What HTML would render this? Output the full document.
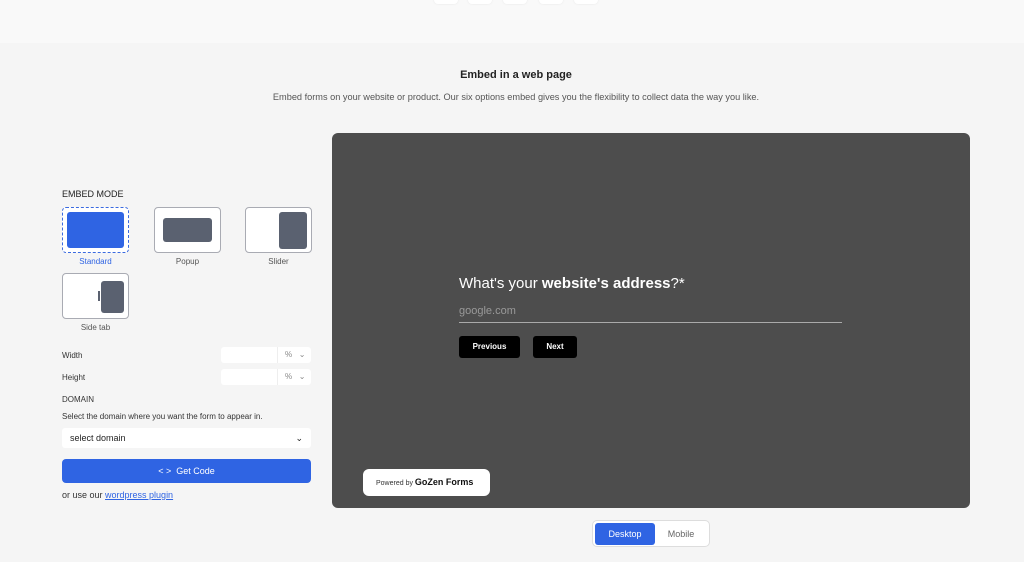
<!DOCTYPE html>
<html><head><style>
*{margin:0;padding:0;box-sizing:border-box}
body{width:1024px;height:562px;background:#f5f5f5;font-family:"Liberation Sans",sans-serif;position:relative;overflow:hidden;color:#222}
.a{position:absolute}
.top{left:0;top:0;width:1024px;height:43px;background:#f9f9f9}
.tb{top:-6px;width:24px;height:10px;background:#fff;border-radius:4px;box-shadow:0 0 2px rgba(0,0,0,.08)}
.card{width:67px;height:46px;background:#fff;border:1px solid #a9abb3;border-radius:4px}
.lbl{font-size:8px;color:#555;text-align:center;width:67px}
.sm{font-size:8px;color:#333}
.inp{background:#fff;border-radius:3px;height:16px;width:90px}
</style></head><body>
<div class="a top"></div>
<div class="a tb" style="left:434px"></div><div class="a tb" style="left:468px"></div><div class="a tb" style="left:503px"></div><div class="a tb" style="left:539px"></div><div class="a tb" style="left:574px"></div>

<div class="a" style="left:0;top:69px;width:1032px;text-align:center;font-size:11px;font-weight:bold;color:#222">Embed in a web page</div>
<div class="a" style="left:0;top:92px;width:1032px;text-align:center;font-size:9.2px;color:#555">Embed forms on your website or product. Our six options embed gives you the flexibility to collect data the way you like.</div>

<div class="a" style="left:62px;top:189px;font-size:9px;color:#222">EMBED MODE</div>
<div class="a card" style="left:62px;top:207px;border-color:#3a6ae0;border-style:dashed"><div class="a" style="left:4px;top:4px;width:57px;height:36px;background:#2f64e3;border-radius:3px"></div></div>
<div class="a lbl" style="left:62px;top:257px;color:#2f64e3">Standard</div>
<div class="a card" style="left:154px;top:207px"><div class="a" style="left:8px;top:10px;width:49px;height:24px;background:#5a6170;border-radius:3px"></div></div>
<div class="a lbl" style="left:154px;top:257px">Popup</div>
<div class="a card" style="left:245px;top:207px"><div class="a" style="left:33px;top:4px;width:28px;height:37px;background:#5a6170;border-radius:3px"></div></div>
<div class="a lbl" style="left:245px;top:257px">Slider</div>
<div class="a card" style="left:62px;top:273px"><div class="a" style="left:38px;top:7px;width:23px;height:32px;background:#5a6170;border-radius:3px"></div><div class="a" style="left:35px;top:17px;width:2px;height:10px;background:#5a6170"></div></div>
<div class="a lbl" style="left:62px;top:323px">Side tab</div>

<div class="a sm" style="left:62px;top:351px">Width</div>
<div class="a inp" style="left:221px;top:347px"><div class="a" style="left:56px;top:0;width:1px;height:16px;background:#eee"></div><span class="a" style="left:64px;top:3px;font-size:8px;color:#888">%&nbsp;&nbsp;&nbsp;⌄</span></div>
<div class="a sm" style="left:62px;top:373px">Height</div>
<div class="a inp" style="left:221px;top:369px"><div class="a" style="left:56px;top:0;width:1px;height:16px;background:#eee"></div><span class="a" style="left:64px;top:3px;font-size:8px;color:#888">%&nbsp;&nbsp;&nbsp;⌄</span></div>
<div class="a sm" style="left:62px;top:395px">DOMAIN</div>
<div class="a sm" style="left:62px;top:412px">Select the domain where you want the form to appear in.</div>
<div class="a" style="left:62px;top:428px;width:249px;height:20px;background:#fff;border-radius:3px;font-size:9px;padding:5px 8px;color:#222">select domain<span style="float:right">⌄</span></div>
<div class="a" style="left:62px;top:459px;width:249px;height:24px;background:#2f64e3;border-radius:4px;color:#fff;font-size:9px;text-align:center;line-height:24px">&lt; &gt;&nbsp;&nbsp;Get Code</div>
<div class="a" style="left:62px;top:490px;font-size:9px;color:#333">or use our <span style="color:#2f64e3;text-decoration:underline">wordpress plugin</span></div>

<div class="a" style="left:332px;top:133px;width:638px;height:375px;background:#4d4d4d;border-radius:6px"></div>
<div class="a" style="left:459px;top:275px;font-size:15px;color:#fff">What's your <b>website's address</b>?*</div>
<div class="a" style="left:459px;top:305px;font-size:11px;color:#999">google.com</div>
<div class="a" style="left:459px;top:322px;width:383px;height:1px;background:#aaa"></div>
<div class="a" style="left:459px;top:336px;width:61px;height:22px;background:#000;border-radius:3px;color:#fff;font-size:8px;font-weight:bold;text-align:center;line-height:22px">Previous</div>
<div class="a" style="left:533px;top:336px;width:44px;height:22px;background:#000;border-radius:3px;color:#fff;font-size:8px;font-weight:bold;text-align:center;line-height:22px">Next</div>
<div class="a" style="left:363px;top:469px;width:127px;height:27px;background:#fff;border-radius:6px;font-size:7px;color:#333;line-height:27px;padding-left:13px">Powered by <b style="font-size:9px;color:#111">GoZen Forms</b></div>

<div class="a" style="left:592px;top:520px;width:118px;height:27px;background:#fff;border:1px solid #ddd;border-radius:5px"></div>
<div class="a" style="left:595px;top:523px;width:60px;height:22px;background:#2f64e3;border-radius:3px;color:#fff;font-size:9px;text-align:center;line-height:22px">Desktop</div>
<div class="a" style="left:655px;top:523px;width:52px;height:22px;color:#666;font-size:9px;text-align:center;line-height:22px">Mobile</div>
</body></html>
